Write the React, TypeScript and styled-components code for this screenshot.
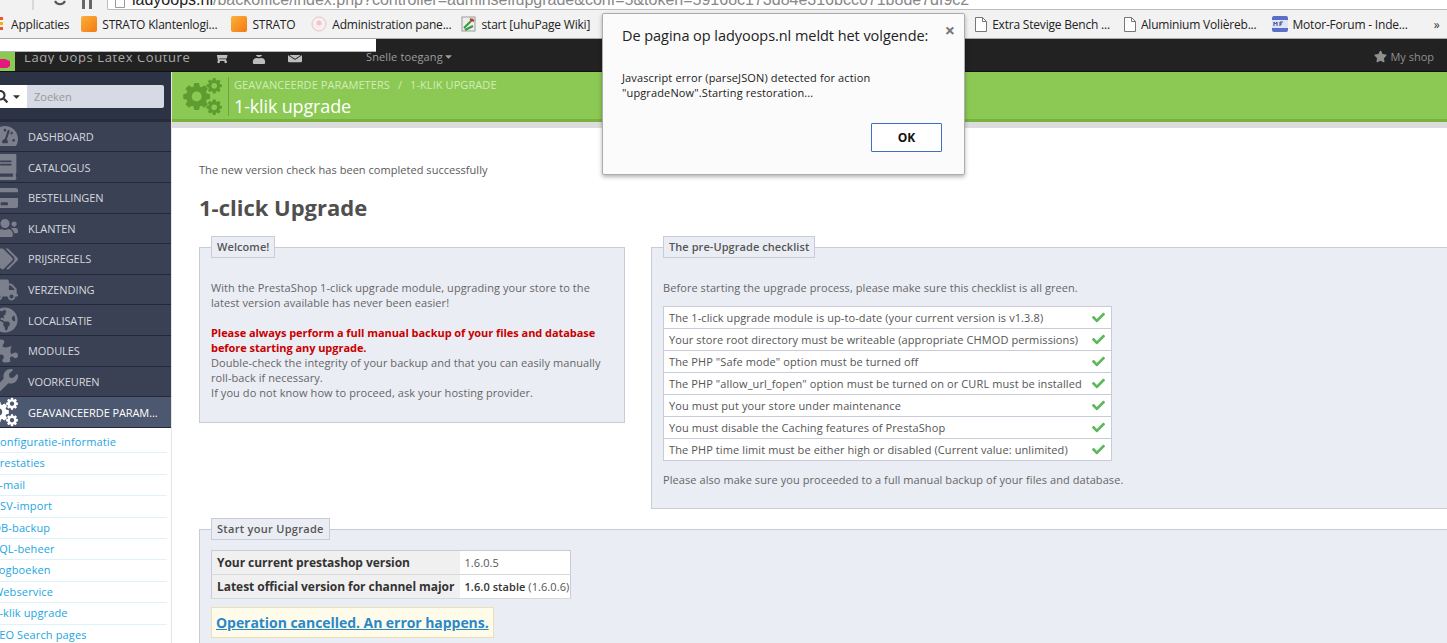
import React from 'react';
import styled, { createGlobalStyle } from 'styled-components';
import {
  FaBook,
  FaCaretDown,
  FaCheck,
  FaCreditCard,
  FaEnvelope,
  FaGlobeAmericas,
  FaPuzzlePiece,
  FaSearch,
  FaShoppingCart,
  FaStar,
  FaTachometerAlt,
  FaTags,
  FaTruck,
  FaUser,
  FaUsers,
  FaWrench,
} from 'react-icons/fa';

const GlobalStyle = createGlobalStyle`
  html, body {
    margin: 0;
    padding: 0;
    height: 643px;
    overflow: hidden;
    background: #fff;
    font-family: "Open Sans", "Liberation Sans", sans-serif;
  }
  * { box-sizing: border-box; }
`;

const Page = styled.div`
  position: relative;
  width: 1447px;
  height: 643px;
  overflow: hidden;
`;

/* browser chrome */
const AddressRow = styled.div`
  height: 10px;
  background: #f2f2f2;
  display: flex;
  align-items: flex-end;
`;

const NavButtons = styled.div`
  flex: 0 0 107px;
  height: 10px;
  overflow: hidden;
  display: flex;
  align-items: flex-end;
  padding: 0 0 0 27px;
  gap: 14px;
`;

const UrlBox = styled.div`
  flex: 1;
  height: 11px;
  background: #fff;
  border: 1px solid #bcbcbc;
  border-top: none;
  border-right: none;
  border-radius: 0 0 0 2px;
  overflow: hidden;
  display: flex;
  align-items: flex-end;
  gap: 7px;
  padding-left: 7px;
  font: 16px/18px "Liberation Sans", Arial, sans-serif;
  color: #888;
  white-space: nowrap;
  b { font-weight: 400; color: #222; }
  svg { flex: none; margin-bottom: 1px; }
`;

const BookmarkRow = styled.div`
  height: 29px;
  background: #f2f2f2;
  border-bottom: 1px solid #a8a8a8;
  display: flex;
  align-items: center;
`;

const Bookmark = styled.div<{ $left: number }>`
  display: flex;
  align-items: center;
  gap: 5px;
  margin-left: ${(p) => p.$left}px;
  font: 12px "Open Sans", sans-serif;
  letter-spacing: -0.2px;
  color: #222;
  white-space: nowrap;
`;

const AppDots = styled.span`
  width: 3px;
  height: 14px;
  background: repeating-linear-gradient(#e8582c 0 3px, #f2f2f2 3px 5px, #f5b400 5px 8px, #f2f2f2 8px 10px);
`;

const AppLabel = styled.span`
  margin-left: 3px;
`;

const StratoIcon = styled.span`
  position: relative;
  width: 16px;
  height: 16px;
  background: linear-gradient(135deg, #fbb03b, #f47a12);
  border-radius: 2px;
`;

const Chevrons = styled.span`
  margin-left: 26px;
  font: 12px "Open Sans", sans-serif;
  color: #333;
`;

/* shop top bar */
const TopBar = styled.div`
  height: 33px;
  background: #222;
  border-bottom: 1px solid #111;
  display: flex;
  align-items: center;
  color: #9d9d9d;
`;

const Logo = styled.div`
  align-self: flex-end;
  width: 15px;
  height: 19px;
  background: #8bc954;
  display: flex;
  align-items: center;
  overflow: hidden;
  margin-right: 9px;
  svg { margin-left: -4px; }
`;

/* the lower half of these is all that survives in the capture */
const ClippedStrip = styled.div`
  height: 9px;
  margin-top: 9px;
  overflow: hidden;
  display: flex;
  align-items: flex-end;
`;

const ShopName = styled(ClippedStrip)`
  width: 190px;
  font-size: 13px;
  line-height: 13px;
  letter-spacing: 0.6px;
  color: #aaa;
  white-space: nowrap;
`;

const BarIcon = styled(ClippedStrip)<{ $width: number }>`
  width: ${(p) => p.$width}px;
  color: #bdbdbd;
  font-size: 14px;
`;

const QuickAccess = styled.span`
  display: flex;
  align-items: center;
  font-size: 11px;
  letter-spacing: 0.12px;
  margin-left: 22px;
  margin-top: 3px;
  white-space: nowrap;
`;

const MyShop = styled.span`
  margin-left: auto;
  margin-right: 13px;
  margin-top: 3px;
  display: flex;
  align-items: center;
  gap: 3px;
  font-size: 11px;
  color: #8f8f8f;
  svg { font-size: 13px; }
`;

const ScreenshotGap = styled.div`
  position: absolute;
  left: 0;
  top: 39px;
  width: 376px;
  height: 13px;
  background: #fff;
  border-bottom: 1px solid #b4b4b4;
`;

/* admin */
const Shell = styled.div`
  display: flex;
  height: 572px;
`;

const Sidebar = styled.nav`
  flex: 0 0 172px;
  background: #fff;
  border-right: 1px solid #e4e4e4;
  overflow: hidden;
`;

const SearchArea = styled.div`
  height: 49.6px;
  background: #2c3344;
  border-bottom: 3px solid #262c3a;
  padding: 13px 7px 0 0;
  display: flex;
`;

const SearchToggle = styled.div`
  width: 27px;
  height: 23px;
  background: #fff;
  display: flex;
  align-items: center;
  gap: 3px;
  color: #333;
  font-size: 11px;
  svg:first-child { margin-left: -5px; font-size: 13px; }
`;

const SearchInput = styled.div`
  flex: 1;
  height: 23px;
  background: #d5dae4;
  border-radius: 0 2px 2px 0;
  padding-left: 7px;
  font-size: 11px;
  line-height: 23px;
  color: #999;
`;

const MenuItem = styled.div<{ $active?: boolean }>`
  height: 30.65px;
  background: ${(p) => (p.$active ? '#4c5770' : '#3a4154')};
  border-bottom: 1px solid #23283a;
  display: flex;
  align-items: center;
  font-size: 11px;
  letter-spacing: -0.1px;
  color: ${(p) => (p.$active ? '#fff' : '#d5d8df')};
  white-space: nowrap;
`;

const MenuIcon = styled.span<{ $active?: boolean }>`
  display: flex;
  justify-content: flex-end;
  width: 19px;
  margin-left: -1px;
  margin-right: 10px;
  font-size: 26px;
  color: ${(p) => (p.$active ? '#fff' : '#7b808c')};
  svg { flex: none; }
`;

const SubMenu = styled.div`
  padding-top: 4px;
`;

const SubItem = styled.div`
  height: 21.4px;
  width: 174px;
  margin-left: -7px;
  border-bottom: 1px solid #def2fa;
  font-size: 11px;
  letter-spacing: 0.13px;
  line-height: 20px;
  color: #1ba6e2;
  white-space: nowrap;
`;

const Main = styled.main`
  flex: 1;
  min-width: 0;
  overflow: hidden;
`;

const PageHead = styled.header`
  height: 50px;
  background: #8bc954;
  border-bottom: 3px solid #77b23f;
  display: flex;
  padding: 5px 0 0 11px;
`;

const HeadGears = styled.div`
  width: 46px;
  height: 39px;
  border-right: 1px solid #6ea33e;
  margin-right: 5px;
  flex: none;
`;

const Breadcrumb = styled.div`
  display: flex;
  gap: 8px;
  font-size: 11px;
  line-height: 14px;
  letter-spacing: 0.08px;
  padding-top: 1px;
  color: #d4ebb9;
`;

const Title = styled.h2`
  margin: 4px 0 0;
  font-size: 18px;
  line-height: 20px;
  font-weight: 400;
  letter-spacing: -0.15px;
  color: #fff;
`;

const GreyBand = styled.div`
  height: 6px;
  background: #dcdcdc;
`;

const Content = styled.div`
  padding: 34px 0 0 27px;
  width: 1400px;
  font-size: 11px;
  line-height: 15px;
  letter-spacing: 0.07px;
  color: #666;
`;

const Notice = styled.p`
  margin: 0;
  font-size: 11px;
  line-height: 15px;
  letter-spacing: 0.04px;
  color: #5a5a5a;
`;

const Heading = styled.h1`
  margin: 15px 0 14px;
  font-size: 22px;
  line-height: 30px;
  font-weight: 700;
  letter-spacing: 0;
  color: #4f4f4f;
`;

const Columns = styled.div`
  display: grid;
  grid-template-columns: 426px 810px;
  gap: 26px;
  align-items: start;
`;

const Panel = styled.fieldset<{ $height: number }>`
  margin: 0;
  min-width: 0;
  height: ${(p) => p.$height}px;
  padding: 22px 11px 0;
  background: #ebedf4;
  border: 1px solid #c9ccd8;
`;

const PanelTitle = styled.legend`
  padding: 0 5px;
  height: 22px;
  background: #ebedf4;
  border: 1px solid #c9ccd8;
  font-size: 11px;
  line-height: 20px;
  font-weight: 600;
  color: #555;
`;

const StartTitle = styled(PanelTitle)`
  letter-spacing: 0.3px;
`;

const Copy = styled.p`
  margin: 0;
  color: #666;
`;

const Warning = styled.strong`
  display: block;
  margin-top: 15px;
  font-weight: 700;
  letter-spacing: -0.05px;
  color: #c80000;
`;

const Checklist = styled.table`
  margin: 11px 0 11px;
  width: 449px;
  border-collapse: collapse;
  background: #fff;
  border: 1px solid #c9ccd8;
`;

const CheckRow = styled.tr`
  height: 22px;
  border-bottom: 1px solid #c9ccd8;
  color: #555;
  white-space: nowrap;
`;

const CheckText = styled.td`
  padding: 0 5px;
  line-height: 15px;
  letter-spacing: 0.1px;
`;

const CheckMark = styled.td`
  width: 30px;
  text-align: center;
  color: #5cb85c;
  font-size: 13px;
  line-height: 0;
`;

const StartPanel = styled(Panel)`
  margin-top: 9px;
  width: 1300px;
  padding-top: 10px;
`;

const VersionTable = styled.table`
  width: 360px;
  table-layout: fixed;
  border-collapse: collapse;
  border: 1px solid #c9ccd8;
  white-space: nowrap;
`;

const VersionRow = styled.tr`
  height: 24px;
  border-bottom: 1px solid #d8d8d8;
`;

const VersionLabel = styled.th`
  width: 248px;
  padding: 0 5px;
  background: #f0f0f0;
  text-align: left;
  font-size: 12px;
  font-weight: 700;
  letter-spacing: -0.05px;
  color: #333;
`;

const VersionValue = styled.td`
  padding: 0 5px;
  background: #fff;
  color: #555;
  strong { color: #333; font-weight: 600; }
`;

const ErrorBox = styled.div`
  margin-top: 8px;
  display: inline-block;
  height: 31px;
  padding: 0 4px;
  background: #fffbea;
  border: 1px solid #ebe0b5;
  font-size: 14px;
  line-height: 30px;
  font-weight: 700;
  letter-spacing: -0.05px;
`;

const ErrorLink = styled.a`
  color: #2a88c9;
  text-decoration: underline;
`;

/* alert */
const Dialog = styled.div`
  position: absolute;
  left: 602px;
  top: 13px;
  width: 363px;
  height: 162px;
  background: #fbfbfb;
  border: 1px solid #adadad;
  border-radius: 2px;
  box-shadow: 0 2px 4px rgba(0, 0, 0, 0.3);
  padding: 12px 18px 0 19px;
  font-family: "Open Sans", sans-serif;
  color: #222;
`;

const DialogClose = styled.span`
  position: absolute;
  right: 9px;
  top: 4px;
  font-size: 18px;
  font-weight: 700;
  color: #777;
`;

const DialogTitle = styled.div`
  font-size: 14.5px;
  line-height: 20px;
  letter-spacing: -0.05px;
`;

const DialogBody = styled.div`
  margin-top: 24px;
  font-size: 11px;
  line-height: 15px;
  letter-spacing: 0.13px;
`;

const DialogActions = styled.div`
  margin-top: 23px;
  display: flex;
  justify-content: flex-end;
  padding-right: 4px;
`;

const OkButton = styled.button`
  width: 71px;
  height: 29px;
  background: #fff;
  border: 1px solid #3d6fc4;
  border-radius: 1px;
  font: 700 12px "Open Sans", sans-serif;
  color: #111;
`;

function gearPath(cx: number, cy: number, r: number, teeth: number) {
  const pts: string[] = [];
  const outer = r;
  const inner = r * 0.76;
  for (let i = 0; i < teeth; i++) {
    const step = (Math.PI * 2) / teeth;
    const a = i * step;
    const seq: [number, number][] = [
      [inner, a - step * 0.4],
      [outer, a - step * 0.22],
      [outer, a + step * 0.22],
      [inner, a + step * 0.4],
    ];
    seq.forEach(([rad, an]) => {
      pts.push(`${(cx + rad * Math.cos(an)).toFixed(2)} ${(cy + rad * Math.sin(an)).toFixed(2)}`);
    });
  }
  const h = r * 0.36;
  return `M${pts.join('L')}Z M${cx - h} ${cy}a${h} ${h} 0 1 0 ${h * 2} 0a${h} ${h} 0 1 0 ${-h * 2} 0Z`;
}

function Gears({ size, color, offset = 0 }: { size: number; color: string; offset?: number }) {
  return (
    <svg width={size} height={size} viewBox="0 0 40 40" style={{ marginLeft: offset, flex: 'none' }}>
      <path fill={color} fillRule="evenodd" d={gearPath(14, 20, 14, 8)} />
      <path fill={color} fillRule="evenodd" d={gearPath(32, 9, 8, 8)} />
      <path fill={color} fillRule="evenodd" d={gearPath(32, 31, 8, 8)} />
    </svg>
  );
}

function PageIcon() {
  return (
    <svg width="12" height="15" viewBox="0 0 12 15">
      <path d="M.5.5h7l4 4v10H.5z" fill="#fff" stroke="#777" />
      <path d="M7.5.5v4h4" fill="none" stroke="#777" />
    </svg>
  );
}

const menu = [
  { label: 'DASHBOARD', icon: <FaTachometerAlt /> },
  { label: 'CATALOGUS', icon: <FaBook /> },
  { label: 'BESTELLINGEN', icon: <FaCreditCard /> },
  { label: 'KLANTEN', icon: <FaUsers /> },
  { label: 'PRIJSREGELS', icon: <FaTags /> },
  { label: 'VERZENDING', icon: <FaTruck /> },
  { label: 'LOCALISATIE', icon: <FaGlobeAmericas /> },
  { label: 'MODULES', icon: <FaPuzzlePiece /> },
  { label: 'VOORKEUREN', icon: <FaWrench /> },
];

const subMenu = [
  'Configuratie-informatie',
  'Prestaties',
  'E-mail',
  'CSV-import',
  'DB-backup',
  'SQL-beheer',
  'Logboeken',
  'Webservice',
  '1-klik upgrade',
  'SEO Search pages',
];

const checks = [
  'The 1-click upgrade module is up-to-date (your current version is v1.3.8)',
  'Your store root directory must be writeable (appropriate CHMOD permissions)',
  'The PHP "Safe mode" option must be turned off',
  'The PHP "allow_url_fopen" option must be turned on or CURL must be installed',
  'You must put your store under maintenance',
  'You must disable the Caching features of PrestaShop',
  'The PHP time limit must be either high or disabled (Current value: unlimited)',
];

export default function App() {
  return (
    <Page>
      <GlobalStyle />
      <AddressRow>
        <NavButtons>
          <svg width="12" height="10" viewBox="0 0 12 10">
            <path d="M6 0v10" stroke="#d8d8d8" strokeWidth="2" fill="none" />
          </svg>
          <svg width="14" height="10" viewBox="0 0 14 10">
            <path d="M2 1a5.5 5.5 0 0 0 10 0" stroke="#555" strokeWidth="2" fill="none" />
          </svg>
          <svg width="12" height="10" viewBox="0 0 12 10">
            <path d="M1 0h3v9H1zM8 0h3v9H8z" fill="#666" />
          </svg>
        </NavButtons>
        <UrlBox>
          <svg width="10" height="8" viewBox="0 0 10 8">
            <path d="M.5 0v7.5h9V0" fill="#fff" stroke="#999" />
          </svg>
          <span>
            <b>ladyoops.nl</b>/backoffice/index.php?controller=adminselfupgrade&amp;conf=5&amp;token=59168c173d84e316bcc071b8de7df9c2
          </span>
        </UrlBox>
      </AddressRow>
      <BookmarkRow>
        <Bookmark $left={0}><AppDots /><AppLabel>Applicaties</AppLabel></Bookmark>
        <Bookmark $left={12}><StratoIcon />STRATO Klantenlogi...</Bookmark>
        <Bookmark $left={14}><StratoIcon />STRATO</Bookmark>
        <Bookmark $left={16}>
          <svg width="16" height="16" viewBox="0 0 16 16">
            <circle cx="8" cy="8" r="7" fill="#fbeef0" stroke="#e3c3c9" />
            <circle cx="8" cy="7" r="2.5" fill="#eac7cf" />
          </svg>
          Administration pane...
        </Bookmark>
        <Bookmark $left={9}>
          <svg width="16" height="16" viewBox="0 0 16 16">
            <rect x="1" y="1" width="13" height="14" fill="#eee" stroke="#999" />
            <path d="M3 12l9-9M4 14l8-4" stroke="#3a9a3a" strokeWidth="2" />
            <path d="M9 3l4 2" stroke="#c33" strokeWidth="2" />
          </svg>
          start [uhuPage Wiki]
        </Bookmark>
        <Bookmark $left={385}><PageIcon />Extra Stevige Bench ...</Bookmark>
        <Bookmark $left={14}><PageIcon />Aluminium Volièreb...</Bookmark>
        <Bookmark $left={15}>
          <svg width="16" height="16" viewBox="0 0 16 16">
            <rect width="16" height="16" rx="2" fill="#5a6fc8" />
            <rect y="4" width="16" height="8" fill="#dfe4f6" />
            <path d="M2 10V6l1.5 2L5 6v4M8 10V6h3M8 8h2" fill="none" stroke="#33458f" strokeWidth="1" />
          </svg>
          Motor-Forum - Inde...
        </Bookmark>
        <Chevrons>»</Chevrons>
      </BookmarkRow>

      <TopBar>
        <Logo>
          <svg width="16" height="12" viewBox="0 0 16 12">
            <path d="M1 3h8l5 2v5l-3 2H4L1 8z" fill="#e6177e" />
          </svg>
        </Logo>
        <ShopName>Lady Oops Latex Couture</ShopName>
        <BarIcon $width={38}><FaShoppingCart /></BarIcon>
        <BarIcon $width={36}><FaUser /></BarIcon>
        <BarIcon $width={56}><FaEnvelope /></BarIcon>
        <QuickAccess>Snelle toegang<FaCaretDown /></QuickAccess>
        <MyShop><FaStar />My shop</MyShop>
      </TopBar>
      <ScreenshotGap />

      <Shell>
        <Sidebar>
          <SearchArea>
            <SearchToggle><FaSearch /><FaCaretDown /></SearchToggle>
            <SearchInput>Zoeken</SearchInput>
          </SearchArea>
          {menu.map((m) => (
            <MenuItem key={m.label}>
              <MenuIcon>{m.icon}</MenuIcon>
              {m.label}
            </MenuItem>
          ))}
          <MenuItem $active>
            <MenuIcon $active><Gears size={30} color="#fff" offset={-12} /></MenuIcon>
            GEAVANCEERDE PARAM...
          </MenuItem>
          <SubMenu>
            {subMenu.map((s) => (
              <SubItem key={s}>{s}</SubItem>
            ))}
          </SubMenu>
        </Sidebar>
        <Main>
          <PageHead>
            <HeadGears><Gears size={39} color="#5f9c30" /></HeadGears>
            <div>
              <Breadcrumb>
                <span>GEAVANCEERDE PARAMETERS</span>
                <span>/</span>
                <span>1-KLIK UPGRADE</span>
              </Breadcrumb>
              <Title>1-klik upgrade</Title>
            </div>
          </PageHead>
          <GreyBand />
          <Content>
            <Notice>The new version check has been completed successfully</Notice>
            <Heading>1-click Upgrade</Heading>
            <Columns>
              <Panel $height={187}>
                <PanelTitle>Welcome!</PanelTitle>
                <Copy>
                  With the PrestaShop 1-click upgrade module, upgrading your store to the
                  <br />
                  latest version available has never been easier!
                </Copy>
                <Warning>
                  Please always perform a full manual backup of your files and database
                  <br />
                  before starting any upgrade.
                </Warning>
                <Copy>
                  Double-check the integrity of your backup and that you can easily manually
                  <br />
                  roll-back if necessary.
                  <br />
                  If you do not know how to proceed, ask your hosting provider.
                </Copy>
              </Panel>
              <Panel $height={273}>
                <PanelTitle>The pre-Upgrade checklist</PanelTitle>
                <Copy>Before starting the upgrade process, please make sure this checklist is all green.</Copy>
                <Checklist>
                  <tbody>
                    {checks.map((c) => (
                      <CheckRow key={c}>
                        <CheckText>{c}</CheckText>
                        <CheckMark><FaCheck /></CheckMark>
                      </CheckRow>
                    ))}
                  </tbody>
                </Checklist>
                <Copy>Please also make sure you proceeded to a full manual backup of your files and database.</Copy>
              </Panel>
            </Columns>
            <StartPanel $height={140}>
              <StartTitle>Start your Upgrade</StartTitle>
              <VersionTable>
                <tbody>
                  <VersionRow>
                    <VersionLabel>Your current prestashop version</VersionLabel>
                    <VersionValue>1.6.0.5</VersionValue>
                  </VersionRow>
                  <VersionRow>
                    <VersionLabel>Latest official version for channel major</VersionLabel>
                    <VersionValue><strong>1.6.0 stable</strong> (1.6.0.6)</VersionValue>
                  </VersionRow>
                </tbody>
              </VersionTable>
              <ErrorBox><ErrorLink href="#">Operation cancelled. An error happens.</ErrorLink></ErrorBox>
            </StartPanel>
          </Content>
        </Main>
      </Shell>

      <Dialog>
        <DialogClose>×</DialogClose>
        <DialogTitle>De pagina op ladyoops.nl meldt het volgende:</DialogTitle>
        <DialogBody>
          Javascript error (parseJSON) detected for action
          <br />
          "upgradeNow".Starting restoration...
        </DialogBody>
        <DialogActions><OkButton>OK</OkButton></DialogActions>
      </Dialog>
    </Page>
  );
}
